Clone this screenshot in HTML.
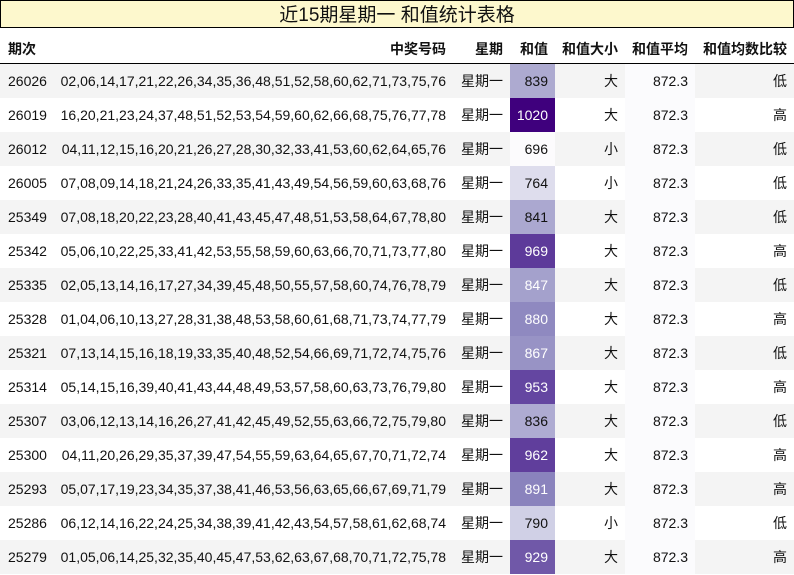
<!DOCTYPE html><html><head><meta charset="utf-8"><style>
body{margin:0;width:794px;height:575px;overflow:hidden;background:#fff;font-family:"Liberation Sans","Noto Sans CJK SC",sans-serif;font-size:14px;color:#111}
.t{position:absolute;left:0;top:0;width:792px;height:26px;border:1px solid #000;background:#fdf8cd;text-align:center;font-size:19px;line-height:29px}
table{position:absolute;left:0;top:28px;border-collapse:collapse;table-layout:fixed;width:794px}
th{height:29px;font-weight:bold;text-align:right;padding:6px 7px 0 0;border-bottom:1.5px solid #000}
td{height:34px;text-align:right;padding:0 7px 0 0;white-space:nowrap}
tr:nth-child(even) td{background:#f4f4f4}
td:first-child,th:first-child{text-align:left;padding-left:8px}
td.a{background:#fbfbfd!important}
td.w{color:#fff}
</style></head><body>
<div class="t">近15期星期一 和值统计表格</div>
<table>
<colgroup><col style="width:55px"><col style="width:398px"><col style="width:57px"><col style="width:45px"><col style="width:70px"><col style="width:70px"><col style="width:99px"></colgroup>
<tr><th>期次</th><th>中奖号码</th><th>星期</th><th>和值</th><th>和值大小</th><th>和值平均</th><th>和值均数比较</th></tr>
<tr><td>26026</td><td>02,06,14,17,21,22,26,34,35,36,48,51,52,58,60,62,71,73,75,76</td><td>星期一</td><td style="background:#adaad0">839</td><td>大</td><td class="a">872.3</td><td>低</td></tr>
<tr><td>26019</td><td>16,20,21,23,24,37,48,51,52,53,54,59,60,62,66,68,75,76,77,78</td><td>星期一</td><td class="w" style="background:#3f007d">1020</td><td>大</td><td class="a">872.3</td><td>高</td></tr>
<tr><td>26012</td><td>04,11,12,15,16,20,21,26,27,28,30,32,33,41,53,60,62,64,65,76</td><td>星期一</td><td style="background:#fcfbfd">696</td><td>小</td><td class="a">872.3</td><td>低</td></tr>
<tr><td>26005</td><td>07,08,09,14,18,21,24,26,33,35,41,43,49,54,56,59,60,63,68,76</td><td>星期一</td><td style="background:#dedded">764</td><td>小</td><td class="a">872.3</td><td>低</td></tr>
<tr><td>25349</td><td>07,08,18,20,22,23,28,40,41,43,45,47,48,51,53,58,64,67,78,80</td><td>星期一</td><td style="background:#aba8d0">841</td><td>大</td><td class="a">872.3</td><td>低</td></tr>
<tr><td>25342</td><td>05,06,10,22,25,33,41,42,53,55,58,59,60,63,66,70,71,73,77,80</td><td>星期一</td><td class="w" style="background:#5d3a9a">969</td><td>大</td><td class="a">872.3</td><td>高</td></tr>
<tr><td>25335</td><td>02,05,13,14,16,17,27,34,39,45,48,50,55,57,58,60,74,76,78,79</td><td>星期一</td><td class="w" style="background:#a4a1cc">847</td><td>大</td><td class="a">872.3</td><td>低</td></tr>
<tr><td>25328</td><td>01,04,06,10,13,27,28,31,38,48,53,58,60,61,68,71,73,74,77,79</td><td>星期一</td><td class="w" style="background:#8f89c0">880</td><td>大</td><td class="a">872.3</td><td>高</td></tr>
<tr><td>25321</td><td>07,13,14,15,16,18,19,33,35,40,48,52,54,66,69,71,72,74,75,76</td><td>星期一</td><td class="w" style="background:#9893c5">867</td><td>大</td><td class="a">872.3</td><td>低</td></tr>
<tr><td>25314</td><td>05,14,15,16,39,40,41,43,44,48,49,53,57,58,60,63,73,76,79,80</td><td>星期一</td><td class="w" style="background:#6446a1">953</td><td>大</td><td class="a">872.3</td><td>高</td></tr>
<tr><td>25307</td><td>03,06,12,13,14,16,26,27,41,42,45,49,52,55,63,66,72,75,79,80</td><td>星期一</td><td style="background:#aeabd2">836</td><td>大</td><td class="a">872.3</td><td>低</td></tr>
<tr><td>25300</td><td>04,11,20,26,29,35,37,39,47,54,55,59,63,64,65,67,70,71,72,74</td><td>星期一</td><td class="w" style="background:#603e9c">962</td><td>大</td><td class="a">872.3</td><td>高</td></tr>
<tr><td>25293</td><td>05,07,17,19,23,34,35,37,38,41,46,53,56,63,65,66,67,69,71,79</td><td>星期一</td><td class="w" style="background:#8a83bd">891</td><td>大</td><td class="a">872.3</td><td>高</td></tr>
<tr><td>25286</td><td>06,12,14,16,22,24,25,34,38,39,41,42,43,54,57,58,61,62,68,74</td><td>星期一</td><td style="background:#d0d0e6">790</td><td>小</td><td class="a">872.3</td><td>低</td></tr>
<tr><td>25279</td><td>01,05,06,14,25,32,35,40,45,47,53,62,63,67,68,70,71,72,75,78</td><td>星期一</td><td class="w" style="background:#7058a8">929</td><td>大</td><td class="a">872.3</td><td>高</td></tr>
</table>
</body></html>
